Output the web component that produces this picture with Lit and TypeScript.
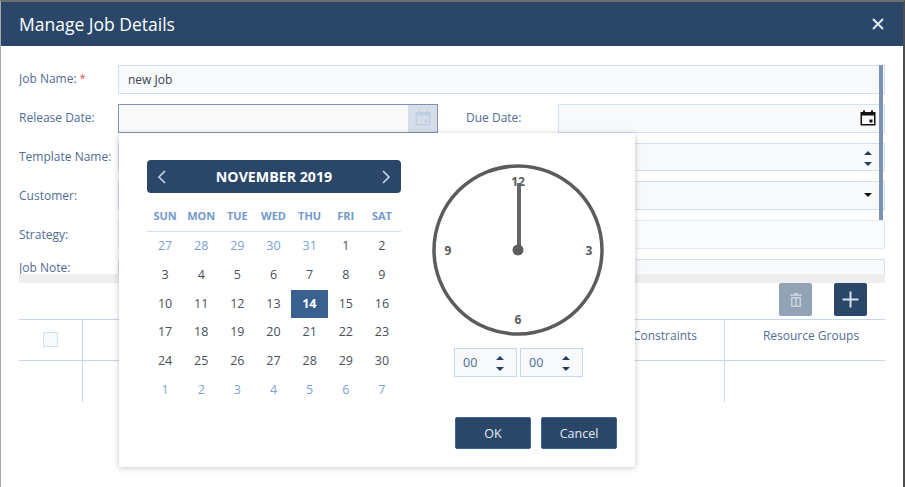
import { LitElement, html, css, svg } from "lit";
import { customElement } from "lit/decorators.js";

const WEEK = ["SUN", "MON", "TUE", "WED", "THU", "FRI", "SAT"];
const DAYS: [number, boolean][] = [
  ...[27, 28, 29, 30, 31].map((d) => [d, true] as [number, boolean]),
  ...Array.from({ length: 30 }, (_, i) => [i + 1, false] as [number, boolean]),
  ...[1, 2, 3, 4, 5, 6, 7].map((d) => [d, true] as [number, boolean]),
];

const calIcon = svg`<path fill="currentColor" fill-rule="evenodd" d="M3 0.5h2V2h6V0.5h2V2h2.5v13.5H.5V2H3zM2 5.5V14h12V5.5zM9.5 9.5h3v3h-3z"/>`;

@customElement("app-root")
export class AppRoot extends LitElement {
  static styles = css`
    :host {
      display: block;
      width: 905px;
      height: 487px;
      position: relative;
      overflow: hidden;
      font-family: "Open Sans", "Noto Sans", sans-serif;
      font-size: 12px;
      color: #4f6d96;
      background: #fff;
      box-sizing: border-box;
    }
    * { box-sizing: border-box; }
    .dialog {
      width: 905px;
      height: 487px;
      border-left: 1px solid #a9a9a9;
      border-right: 2px solid #4d4d4d;
      border-top: 2px solid #6e6e6e;
      background: #fff;
      display: flex;
      flex-direction: column;
    }
    .header {
      height: 44px;
      flex: none;
      background: #2a4769;
      color: #fff;
      display: flex;
      align-items: center;
      justify-content: space-between;
      padding: 0 19px 0 18px;
      font-size: 17.5px;
    }
    .close { display: block; width: 12px; height: 12px; }
    .form {
      margin: 19px 0 0 18px;
      width: 866px;
      height: 218px;
      position: relative;
      overflow: hidden;
      flex: none;
      border-bottom: 9px solid #eeeeee;
    }
    .grid {
      display: grid;
      grid-template-columns: 99px 320px 120px 327px;
      grid-auto-rows: 28.8px;
      row-gap: 10px;
      align-items: center;
    }
    .label { white-space: nowrap; padding-bottom: 1px; }
    .note { align-self: start; line-height: 16px; padding: 1px 0 0; }
    .req { color: #e2434b; font-size: 10px; vertical-align: 1px; }
    .due { padding-left: 28px; }
    .field {
      height: 100%;
      background: #f7f9fb;
      border: 1px solid #d3e0f0;
      color: #3a4350;
      display: flex;
      align-items: center;
      padding-left: 9px;
      position: relative;
    }
    .wide { grid-column: 2 / 5; }
    .light { background: #fbfcfd; border-color: #e2ebf5; }
    .active {
      background: #fafafa;
      border: 1px solid #7d94b5;
      padding: 0;
      justify-content: flex-end;
    }
    .cal-btn {
      width: 29px;
      height: 100%;
      background: #d6dfe9;
      color: #bfd0e4;
      display: flex;
      align-items: center;
      justify-content: center;
    }
    .cal-btn svg, .due-icon { width: 16px; height: 16px; display: block; }
    .due-field { justify-content: flex-end; padding-right: 8px; color: #111; }
    .spin-arrows {
      display: flex;
      flex-direction: column;
      gap: 7px;
      position: absolute;
      right: 12px;
      top: 7px;
    }
    .up { width: 0; height: 0; border: 4px solid transparent; border-top: 0; border-bottom: 4px solid #24405f; }
    .down { width: 0; height: 0; border: 4px solid transparent; border-bottom: 0; border-top: 4px solid #24405f; }
    .drop { position: absolute; right: 12px; top: 11px; border-top-color: #111; }
    .vbar {
      position: absolute;
      right: 2px;
      top: 0;
      width: 4px;
      height: 155px;
      background: #7893b6;
    }
    .tools {
      height: 36px;
      flex: none;
      display: flex;
      justify-content: flex-end;
      gap: 22px;
      padding-right: 36px;
      align-items: flex-start;
    }
    .tool {
      width: 33px;
      height: 33px;
      border-radius: 2px;
      background: #2a4769;
      display: flex;
      align-items: center;
      justify-content: center;
    }
    .tool.off { background: #93a3b6; }
    .table { margin-left: 18px; width: 866px; }
    .row { display: grid; grid-template-columns: 64px 1fr 119px 160px; }
    .head { height: 42px; border-top: 1px solid #c7d6ea; border-bottom: 1px solid #c7d6ea; }
    .body { height: 41px; }
    .cell {
      border-right: 1px solid #c7d6ea;
      display: flex;
      justify-content: center;
      padding-top: 7px;
      white-space: nowrap;
    }
    .cell:last-child { border-right: 0; padding-left: 12px; }
    .check { width: 15px; height: 15px; margin: 5px 1px 0 0; background: #f7f9fb; border: 1px solid #d3e0f0; }
    .popup {
      position: absolute;
      left: 119px;
      top: 133px;
      width: 516px;
      height: 334px;
      background: #fff;
      box-shadow: 0 1px 6px rgba(0, 0, 0, 0.22);
      padding: 27px 18px 18px 28px;
      display: flex;
      flex-direction: column;
    }
    .pick { display: flex; gap: 31px; flex: 1; }
    .cal { width: 254px; }
    .cal-head {
      height: 33px;
      background: #2a4769;
      border-radius: 4px;
      color: #fff;
      display: flex;
      align-items: center;
      justify-content: space-between;
      padding: 0 10px;
      font-weight: 700;
      font-size: 14.2px;
    }
    .cal-head svg { width: 10px; height: 16px; display: block; }
    .week {
      display: grid;
      grid-template-columns: repeat(7, 1fr);
      height: 39px;
      padding: 14px 1px 0 0;
      border-bottom: 1px solid #d3e0f0;
      color: #7399cc;
      font-weight: 700;
      font-size: 11px;
      text-align: center;
      line-height: 18px;
    }
    .days {
      display: grid;
      grid-template-columns: repeat(7, 1fr);
      grid-auto-rows: 28.8px;
      padding-right: 1px;
      text-align: center;
      line-height: 28.8px;
      color: #4a5058;
      font-size: 12.5px;
    }
    .muted { color: #7aa3d8; }
    .sel { background: #3a6090; color: #fff; font-weight: 700; margin-left: -0.6px; }
    .clock-col { width: 172px; padding-top: 4px; }
    .clock { display: block; width: 172px; height: 172px; }
    .clock text {
      font-family: "Open Sans", "Noto Sans", sans-serif;
      font-size: 12px;
      font-weight: 700;
      fill: #5a5a5a;
      text-anchor: middle;
      dominant-baseline: central;
    }
    .times { display: flex; gap: 3px; margin: 12px 0 0 22px; }
    .time {
      width: 63px;
      height: 28.8px;
      background: #f7f9fb;
      border: 1px solid #c7d8ec;
      display: flex;
      align-items: center;
      padding-left: 8px;
      position: relative;
      font-size: 12.5px;
    }
    .actions { display: flex; justify-content: flex-end; gap: 10px; }
    .btn {
      width: 76px;
      height: 32px;
      background: #2a4769;
      border: 1px solid #3c6596;
      border-radius: 2px;
      color: #e6ebf2;
      display: flex;
      align-items: center;
      justify-content: center;
      font-size: 12.5px;
    }
  `;

  render() {
    return html`
      <div class="dialog">
        <div class="header">
          <span>Manage Job Details</span>
          <svg class="close" viewBox="0 0 12 12"><path d="M1 1l10 10M11 1L1 11" stroke="#e8eef5" stroke-width="1.8"/></svg>
        </div>
        <div class="form">
          <div class="grid">
            <div class="label">Job Name: <span class="req">*</span></div>
            <div class="field wide">new Job</div>

            <div class="label">Release Date:</div>
            <div class="field active"><div class="cal-btn"><svg viewBox="0 0 16 16">${calIcon}</svg></div></div>
            <div class="label due">Due Date:</div>
            <div class="field due-field"><svg class="due-icon" viewBox="0 0 16 16">${calIcon}</svg></div>

            <div class="label">Template Name:</div>
            <div class="field"></div>
            <div></div>
            <div class="field"><div class="spin-arrows"><div class="up"></div><div class="down"></div></div></div>

            <div class="label">Customer:</div>
            <div class="field"></div>
            <div></div>
            <div class="field"><div class="down drop"></div></div>

            <div class="label">Strategy:</div>
            <div class="field wide light"></div>

            <div class="label note">Job Note:</div>
            <div class="field wide"></div>
          </div>
          <div class="vbar"></div>
        </div>
        <div class="tools">
          <div class="tool off">
            <svg width="14" height="16" viewBox="0 0 14 16"><path fill="#c9d2dc" d="M1 2.5h4V1h4v1.5h4V4H1zM2 5h10v10H2zM3.5 6.5v7h2.7v-7zM7.8 6.5v7h2.7v-7z" fill-rule="evenodd"/></svg>
          </div>
          <div class="tool">
            <svg width="17" height="17" viewBox="0 0 17 17"><path d="M8.5 0.5v16M0.5 8.5h16" stroke="#d5e0ec" stroke-width="2"/></svg>
          </div>
        </div>
        <div class="table">
          <div class="row head">
            <div class="cell"><div class="check"></div></div>
            <div class="cell"></div>
            <div class="cell">Constraints</div>
            <div class="cell">Resource Groups</div>
          </div>
          <div class="row body">
            <div class="cell"></div>
            <div class="cell"></div>
            <div class="cell"></div>
            <div class="cell"></div>
          </div>
        </div>
      </div>
      <div class="popup">
        <div class="pick">
          <div class="cal">
            <div class="cal-head">
              <svg viewBox="0 0 10 16"><path d="M8 2L2 8l6 6" fill="none" stroke="#c8d6e6" stroke-width="1.6"/></svg>
              <span>NOVEMBER 2019</span>
              <svg viewBox="0 0 10 16"><path d="M2 2l6 6-6 6" fill="none" stroke="#c8d6e6" stroke-width="1.6"/></svg>
            </div>
            <div class="week">${WEEK.map((w) => html`<div>${w}</div>`)}</div>
            <div class="days">
              ${DAYS.map(([d, m]) => {
                const cls = m ? "muted" : d === 14 ? "sel" : "";
                return html`<div class=${cls}>${d}</div>`;
              })}
            </div>
          </div>
          <div class="clock-col">
            <svg class="clock" viewBox="0 0 172 172">
              <circle cx="86" cy="86" r="84" fill="#fff" stroke="#5c5c5c" stroke-width="3.5"/>
              <text x="86" y="17">12</text>
              <text x="157" y="86">3</text>
              <text x="86" y="155">6</text>
              <text x="16" y="86">9</text>
              <line x1="87" y1="19" x2="87" y2="86" stroke="#666" stroke-width="4"/>
              <circle cx="86" cy="86" r="5.5" fill="#5c5c5c"/>
            </svg>
            <div class="times">
              <div class="time">00<div class="spin-arrows"><div class="up"></div><div class="down"></div></div></div>
              <div class="time">00<div class="spin-arrows"><div class="up"></div><div class="down"></div></div></div>
            </div>
          </div>
        </div>
        <div class="actions">
          <div class="btn">OK</div>
          <div class="btn">Cancel</div>
        </div>
      </div>
    `;
  }
}
